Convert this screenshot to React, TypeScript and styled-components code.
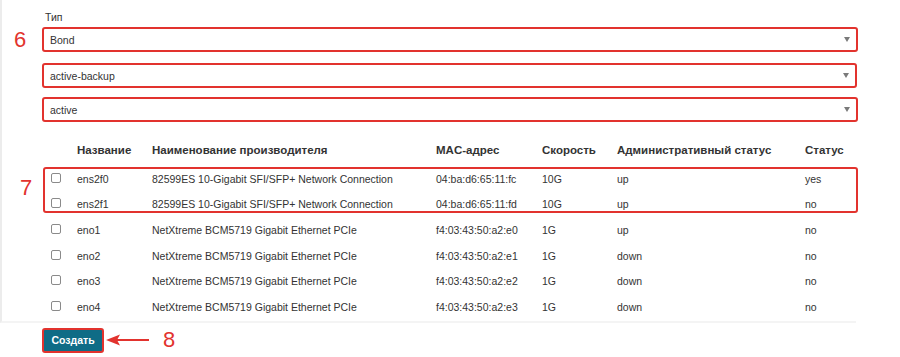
import styled, { createGlobalStyle } from "styled-components";

const GlobalStyle = createGlobalStyle`
    html, body {
        margin: 0;
        padding: 0;
        background: #ffffff;
    }
    body {
        font-family: "Liberation Sans", Arial, sans-serif;
        font-size: 10.5px;
        color: #333333;
    }
`;

const RED = "#e2332e";

const Page = styled.div`
    width: 900px;
    height: 357px;
    position: relative;
    overflow: hidden;
`;

const Card = styled.div`
    width: 856px;
    box-sizing: border-box;
    border-left: 2px solid #ececec;
    border-bottom: 2px solid #f4f4f4;
    padding: 11px 0 1px 40px;
`;

const Label = styled.div`
    font-size: 10.5px;
    line-height: 13px;
    margin: 0 0 3px 3px;
    color: #333;
`;

const Select = styled.div<{ $gap: number; $w: number }>`
    box-sizing: border-box;
    width: ${(p) => p.$w}px;
    height: 25px;
    margin-top: ${(p) => p.$gap}px;
    border: 2px solid ${RED};
    border-radius: 3px;
    display: flex;
    align-items: center;
    justify-content: space-between;
    padding: 0 6px 0 6px;
    font-size: 10.5px;
    color: #333;
`;

const Caret = styled.span`
    width: 0;
    height: 0;
    border-left: 3.5px solid transparent;
    border-right: 3.5px solid transparent;
    border-top: 5px solid #7a7a7a;
`;

const Table = styled.div`
    margin-top: 14px;
    width: 814px;
`;

const Row = styled.div<{ $head?: boolean }>`
    display: grid;
    grid-template-columns: 26px 75px 284px 106px 75px 188px 1fr;
    align-items: center;
    height: ${(p) => (p.$head ? "28px" : "25.6px")};
    padding-left: 9px;
    padding-bottom: ${(p) => (p.$head ? "2px" : "0")};
    font-size: ${(p) => (p.$head ? "11.5px" : "10.5px")};
    font-weight: ${(p) => (p.$head ? 700 : 400)};
    color: #333;
    white-space: nowrap;
`;

const Group = styled.div`
    position: relative;
    &::after {
        content: "";
        position: absolute;
        left: 1px;
        right: -2px;
        top: 1px;
        bottom: 4px;
        border: 2px solid ${RED};
        border-radius: 3px;
        pointer-events: none;
    }
`;

const Check = styled.span`
    display: block;
    width: 10px;
    height: 10px;
    box-sizing: border-box;
    border: 1px solid #8a8a8a;
    border-radius: 2px;
    background: #fff;
    margin-top: -2px;
`;

const Footer = styled.div`
    display: flex;
    align-items: center;
    padding: 5px 0 0 42px;
`;

const Button = styled.button`
    box-sizing: border-box;
    width: 62px;
    height: 25px;
    border: 2px solid ${RED};
    border-radius: 3px;
    background: #0f6c86;
    color: #ffffff;
    font-family: "Liberation Sans", Arial, sans-serif;
    font-weight: 700;
    font-size: 10.5px;
    padding: 0;
`;

const Arrow = styled.svg`
    margin-left: 1px;
    display: block;
`;

const Marker = styled.span<{ $x: number; $y: number }>`
    position: absolute;
    left: ${(p) => p.$x}px;
    top: ${(p) => p.$y}px;
    font-size: 22px;
    line-height: 22px;
    color: ${RED};
`;

const Num = styled.span`
    font-size: 22px;
    line-height: 22px;
    color: ${RED};
    margin-left: 12px;
    margin-top: -1px;
`;

type Nic = {
    name: string;
    maker: string;
    mac: string;
    speed: string;
    admin: string;
    status: string;
};

const BOND: Nic[] = [
    { name: "ens2f0", maker: "82599ES 10-Gigabit SFI/SFP+ Network Connection", mac: "04:ba:d6:65:11:fc", speed: "10G", admin: "up", status: "yes" },
    { name: "ens2f1", maker: "82599ES 10-Gigabit SFI/SFP+ Network Connection", mac: "04:ba:d6:65:11:fd", speed: "10G", admin: "up", status: "no" },
];

const OTHERS: Nic[] = [
    { name: "eno1", maker: "NetXtreme BCM5719 Gigabit Ethernet PCIe", mac: "f4:03:43:50:a2:e0", speed: "1G", admin: "up", status: "no" },
    { name: "eno2", maker: "NetXtreme BCM5719 Gigabit Ethernet PCIe", mac: "f4:03:43:50:a2:e1", speed: "1G", admin: "down", status: "no" },
    { name: "eno3", maker: "NetXtreme BCM5719 Gigabit Ethernet PCIe", mac: "f4:03:43:50:a2:e2", speed: "1G", admin: "down", status: "no" },
    { name: "eno4", maker: "NetXtreme BCM5719 Gigabit Ethernet PCIe", mac: "f4:03:43:50:a2:e3", speed: "1G", admin: "down", status: "no" },
];

const NicRow = ({ nic }: { nic: Nic }) => (
    <Row>
        <Check />
        <span>{nic.name}</span>
        <span>{nic.maker}</span>
        <span>{nic.mac}</span>
        <span>{nic.speed}</span>
        <span>{nic.admin}</span>
        <span>{nic.status}</span>
    </Row>
);

const App = () => {
    return (
        <Page>
            <GlobalStyle />
            <Card>
                <Label>Тип</Label>
                <Select $gap={0} $w={816}>
                    Bond <Caret />
                </Select>
                <Select $gap={11} $w={815}>
                    active-backup <Caret />
                </Select>
                <Select $gap={9} $w={816}>
                    active <Caret />
                </Select>
                <Table>
                    <Row $head>
                        <span />
                        <span>Название</span>
                        <span>Наименование производителя</span>
                        <span>MAC-адрес</span>
                        <span>Скорость</span>
                        <span>Административный статус</span>
                        <span>Статус</span>
                    </Row>
                    <Group>
                        {BOND.map((n) => (
                            <NicRow nic={n} key={n.name} />
                        ))}
                    </Group>
                    {OTHERS.map((n) => (
                        <NicRow nic={n} key={n.name} />
                    ))}
                </Table>
            </Card>
            <Footer>
                <Button>Создать</Button>
                <Arrow width="46" height="16" viewBox="0 0 46 16">
                    <path d="M4 8 H44" stroke={RED} strokeWidth="2.2" />
                    <path d="M1 8 L15 2.5 L12 8 L15 13.5 Z" fill={RED} />
                </Arrow>
                <Num>8</Num>
            </Footer>
            <Marker $x={14} $y={29}>6</Marker>
            <Marker $x={20} $y={177}>7</Marker>
        </Page>
    );
};

export default App;
